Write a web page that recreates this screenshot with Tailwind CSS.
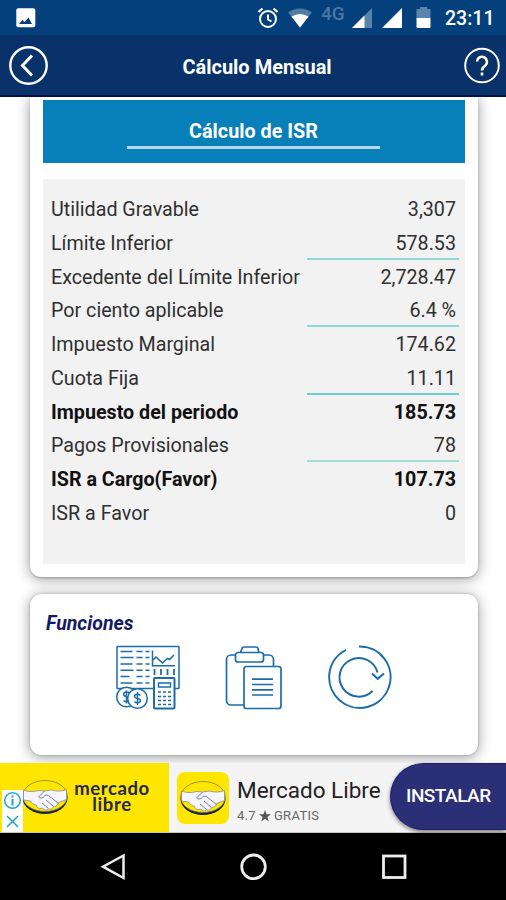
<!DOCTYPE html>
<html lang="es">
<head>
    <meta charset="UTF-8">
    <meta name="viewport" content="width=device-width, initial-scale=1.0">
    <title>Cálculo Mensual</title>
    <script src="https://cdn.jsdelivr.net/npm/@tailwindcss/browser@4"></script>
</head>
<body class="bg-white font-['Roboto',sans-serif]">
    <div class="w-[506px] h-[900px] flex flex-col overflow-hidden">
        <!-- Status bar -->
        <div class="h-[35px] shrink-0 bg-[#04407c] flex items-center pl-4 pr-[9px] text-white">
            <svg class="w-5 h-5 mt-px" viewBox="0 0 20 20">
                <rect x="0.3" y="0.3" width="19" height="19" rx="2" fill="#fff"/>
                <path d="M3 16l3.500-4 2 2 4-4.500 3.500 6.500z" fill="#04407c"/>
            </svg>
            <div class="ml-auto flex items-center">
                <svg class="w-[22px] h-[22px]" viewBox="0 0 22 22" fill="none" stroke="#fff" stroke-width="2">
                    <circle cx="11" cy="12" r="8"/>
                    <path d="M11 7.500v5l3.500 2"/>
                    <path d="M1.500 5l4-3.500M20.500 5l-4-3.500" stroke-width="2.200"/>
                </svg>
                <svg class="w-6 h-5 ml-[9px]" viewBox="0 0 24 20">
                    <path d="M0 4.500Q12-3.500 24 4.500L12 19.500z" fill="#4f7ba6"/>
                    <path d="M3.500 8.500Q12 3.500 20.500 8.500L12 19.500z" fill="#fff"/>
                </svg>
                <span class="ml-[9px] mb-2 w-[25px] text-[19px] leading-none font-medium text-[#4a76a4]">4G</span>
                <svg class="w-5 h-5 ml-[6px]" viewBox="0 0 20 20">
                    <path d="M20 0v20H0z" fill="#5b84ad"/>
                    <path d="M12.500 7.500V20H0z" fill="#fff"/>
                </svg>
                <svg class="w-5 h-5 ml-[10px]" viewBox="0 0 20 20">
                    <path d="M20 0v20H0z" fill="#fff"/>
                </svg>
                <svg class="w-[15px] h-[21px] ml-[14px]" viewBox="0 0 15 21">
                    <path d="M4 0h7v2h3.500v9H.5V2H4z" fill="#5b84ad"/>
                    <path d="M.5 11h14v9a1 1 0 0 1-1 1h-12a1 1 0 0 1-1-1z" fill="#fff"/>
                </svg>
                <span class="ml-[14px] mt-[2px] w-[52px] text-[19.500px] leading-none font-medium whitespace-nowrap">23:11</span>
            </div>
        </div>

        <!-- App bar -->
        <header class="h-[62px] shrink-0 bg-[#083269] border-b-2 border-[#03104f] flex items-center justify-between pl-2 pr-[3px]">
            <svg class="w-10 h-10" viewBox="0 0 40 40" fill="none" stroke="#fff">
                <circle cx="20.500" cy="20.500" r="18.200" stroke-width="2.400"/>
                <path d="M24 10.500L14.500 20.500L24 30.500" stroke-width="3"/>
            </svg>
            <h1 class="text-white text-[20px] font-bold mt-[4px] pl-[3px] whitespace-nowrap">Cálculo Mensual</h1>
            <svg class="w-10 h-10" viewBox="0 0 40 40" fill="none" stroke="#fff">
                <circle cx="19" cy="20.500" r="16.800" stroke-width="2"/>
                <path d="M14 16.500a5 5 0 1 1 8.300 4q-3.300 2.300-3.300 5" stroke-width="2.600"/>
                <path d="M19 27.500v3" stroke-width="2.600"/>
            </svg>
        </header>

        <!-- Content -->
        <main class="h-[666px] shrink-0 overflow-hidden px-[30px] flex flex-col">
            <section class="w-[448px] h-[480px] shrink-0 bg-white rounded-b-[11px] pl-[12.500px] pr-[13.500px] pt-[3px] shadow-[0_2px_14px_rgba(0,0,0,0.4),0_1px_2px_rgba(0,0,0,0.22)]">
                <div class="h-[63px] bg-[#077fb8] flex flex-col items-center pt-[18px]">
                    <h2 class="text-white text-[19.800px] leading-7 font-bold">Cálculo de ISR</h2>
                    <div class="w-[253px] h-[3px] bg-[#b5d8ea]"></div>
                </div>
                <div class="mt-4 h-[385px] bg-[#f2f2f2] pt-[13px] pl-[8.500px] pr-[5.500px] text-[19.700px] text-[#303030]">
                    <div class="h-[33.750px] flex items-center justify-between">
                        <span class="pt-[2px]">Utilidad Gravable</span>
                        <span class="w-[152px] h-full pt-[4px] pr-[3px] flex items-center justify-end border-b-2 border-transparent">3,307</span>
                    </div>
                    <div class="h-[33.750px] flex items-center justify-between">
                        <span class="pt-[2px]">Límite Inferior</span>
                        <span class="w-[152px] h-full pt-[4px] pr-[3px] flex items-center justify-end border-b-2 border-[#8fd8d5]">578.53</span>
                    </div>
                    <div class="h-[33.750px] flex items-center justify-between">
                        <span class="pt-[2px] whitespace-nowrap">Excedente del Límite Inferior</span>
                        <span class="w-[152px] h-full pt-[4px] pr-[3px] flex items-center justify-end border-b-2 border-transparent">2,728.47</span>
                    </div>
                    <div class="h-[33.750px] flex items-center justify-between">
                        <span class="pt-[2px]">Por ciento aplicable</span>
                        <span class="w-[152px] h-full pt-[4px] pr-[3px] flex items-center justify-end border-b-2 border-[#8fd8d5]">6.4 %</span>
                    </div>
                    <div class="h-[33.750px] flex items-center justify-between">
                        <span class="pt-[2px]">Impuesto Marginal</span>
                        <span class="w-[152px] h-full pt-[4px] pr-[3px] flex items-center justify-end border-b-2 border-transparent">174.62</span>
                    </div>
                    <div class="h-[33.750px] flex items-center justify-between">
                        <span class="pt-[2px]">Cuota Fija</span>
                        <span class="w-[152px] h-full pt-[4px] pr-[3px] flex items-center justify-end border-b-2 border-[#6fcfcf]">11.11</span>
                    </div>
                    <div class="h-[33.750px] flex items-center justify-between font-bold text-[#111]">
                        <span class="pt-[2px]">Impuesto del periodo</span>
                        <span class="w-[152px] h-full pt-[4px] pr-[3px] flex items-center justify-end border-b-2 border-transparent">185.73</span>
                    </div>
                    <div class="h-[33.750px] flex items-center justify-between">
                        <span class="pt-[2px]">Pagos Provisionales</span>
                        <span class="w-[152px] h-full pt-[4px] pr-[3px] flex items-center justify-end border-b-2 border-[#a5ddd3]">78</span>
                    </div>
                    <div class="h-[33.750px] flex items-center justify-between font-bold text-[#111]">
                        <span class="pt-[2px]">ISR a Cargo(Favor)</span>
                        <span class="w-[152px] h-full pt-[4px] pr-[3px] flex items-center justify-end border-b-2 border-transparent">107.73</span>
                    </div>
                    <div class="h-[33.750px] flex items-center justify-between">
                        <span class="pt-[2px]">ISR a Favor</span>
                        <span class="w-[152px] h-full pt-[4px] pr-[3px] flex items-center justify-end border-b-2 border-transparent">0</span>
                    </div>
                </div>
            </section>

            <section class="mt-[17px] w-[448px] h-[161px] shrink-0 bg-white rounded-[11px] pl-4 pt-[18px] shadow-[0_2px_14px_rgba(0,0,0,0.4),0_0_2px_rgba(0,0,0,0.3)]">
                <h3 class="text-[19.500px] leading-6 font-bold italic text-[#131a63]">Funciones</h3>
                <div class="mt-[9px] pl-[69px] flex">
                    <!-- Report with coins and calculator -->
                    <svg class="w-[66px] h-[66px]" viewBox="0 0 66 66" fill="none" stroke="#1b6cab" stroke-width="1.500">
                        <rect x="2" y="1.500" width="62" height="42" rx="0.500"/>
                        <path d="M5.500 6.500h12M5.500 12.500h13M5.500 19h12M5.500 25.300h13M5.500 31.500h9M5.500 38h12M21.500 6.500h6M30.500 6.500h4M21.500 12.500h6M30.500 12.500h4M21.500 19h6M30.500 19h4M21.500 25.300h6M30.500 25.300h4M21.500 31.500h6M30.500 31.500h4M21.500 38h6M30.500 38h4"/>
                        <path d="M37.500 5.500v15.300H60M38 15l3-3 6.500 6 5-4.500 2 1L59 10"/>
                        <path d="M39.500 24v6M46 24v6M52.500 24v6M59 24v6" stroke-width="1.800"/>
                        <rect x="39" y="33" width="20.500" height="30.500" rx="1" fill="#fff" stroke-width="2"/>
                        <rect x="43.500" y="38" width="12" height="4"/>
                        <path d="M43 47h3M48 47h3M53 47h3M43 51.500h3M48 51.500h3M53 51.500h3M43 55.500h3M48 55.500h3M53 55.500h3M43 59.500h3M48 59.500h3M53 59.500h3"/>
                        <circle cx="11.500" cy="52" r="9.800" fill="#fff"/>
                        <path d="M14.500 48c-2-2-6-1-6 1.500s6 2 6 4.500-4 3.500-6 1.500M11.500 45.500v13"/>
                        <circle cx="22.500" cy="53.500" r="9.800" fill="#fff"/>
                        <path d="M25.500 50.500c-1.500-2-6-1.500-6 1s6 1.500 6 4-4.500 3-6 1M22.500 47v13"/>
                    </svg>
                    <!-- Clipboard -->
                    <svg class="w-[60px] h-[66px] ml-[42.500px]" viewBox="0 0 60 66" fill="none" stroke="#1b6cab" stroke-width="1.700">
                        <path d="M11.500 10H7a4.500 4.500 0 0 0-4.500 4.500v41A4.500 4.500 0 0 0 7 60h13M39 10h6a4.500 4.500 0 0 1 4.500 4.500V21"/>
                        <path d="M16.500 7.500L18 3.500a2 2 0 0 1 2-1.500h12a2 2 0 0 1 2 1.500l1 4"/>
                        <rect x="11.500" y="7.500" width="28" height="9.500" rx="2.500"/>
                        <rect x="20" y="21.500" width="37" height="42" rx="2.500" fill="#fff"/>
                        <path d="M28 34.200h21M28 39.500h21M28 44.800h21M28 50h21"/>
                    </svg>
                    <!-- Reload -->
                    <svg class="w-[66px] h-[66px] ml-[42.500px]" viewBox="0 0 66 66" fill="none" stroke="#1b6cab" stroke-width="2">
                        <path d="M33 1.500A30.700 30.700 0 1 1 20 4.800"/>
                        <path d="M51.500 27.500A19.300 19.300 0 1 0 46.500 46"/>
                        <path d="M46 28.500l5.700 5.300 6.300-5.300"/>
                    </svg>
                </div>
            </section>
        </main>

        <!-- Ad banner -->
        <div class="h-[70px] shrink-0 bg-[#f4f4f4] flex relative border-b border-[#c8c8c8]">
            <div class="w-[169px] h-full bg-[#ffe600] flex items-center">
                <svg class="w-[46px] h-9 ml-[22px] mt-[-1px]" viewBox="0 0 46 36">
                    <ellipse cx="23" cy="19" rx="22.500" ry="16" fill="#1c2150"/>
                    <ellipse cx="23" cy="17" rx="22.300" ry="15.500" fill="#ffe600" stroke="#75713a" stroke-width="0.700"/>
                    <path d="M1.500 11c5 2 10 2 15 .5l6 .5 7-1c5 1.500 10 1.500 15-.5v10l-8 3c-1 4-4 4-5 4-1 3-4 3-5 2-2 3-5 1-6-.5-4 1.500-6-1-6-3-3 0-5-2-6-4l-7-1z" fill="#f5f5fa" stroke="#777ca5" stroke-width="0.700"/>
                    <path d="M22.500 12l-6 6c2 2 5 1 7-2l3 .5 10 8M24 21l7 6M20 24l6 5" fill="none" stroke="#6c719d" stroke-width="0.900"/>
                </svg>
                <div class="ml-[5px] mt-[-4px] w-[78px] text-center text-[18.500px] leading-[16px] tracking-[0.600px] font-bold text-[#252650] font-['Lato',sans-serif]">
                    <div>mercado</div>
                    <div>libre</div>
                </div>
            </div>
            <div class="absolute left-[2px] top-[27px] w-[21px] h-[42px] bg-white">
                <svg class="w-[21px] h-[42px]" viewBox="0 0 21 42" fill="none" stroke="#20a5cc" stroke-width="1.500">
                    <circle cx="10.500" cy="10.500" r="7.800"/>
                    <path d="M10.500 9v6.500M10.500 5.500v2" stroke-width="2"/>
                    <path d="M5 26l11 11M16 26L5 37"/>
                </svg>
            </div>
            <div class="w-[52px] h-[52px] mt-[9px] ml-2 rounded-[8px] bg-[#ffe600] flex items-center justify-center">
                <svg class="w-[46px] h-9" viewBox="0 0 46 36">
                    <ellipse cx="23" cy="19" rx="22.500" ry="16" fill="#1c2150"/>
                    <ellipse cx="23" cy="17" rx="22.300" ry="15.500" fill="#ffe600" stroke="#75713a" stroke-width="0.700"/>
                    <path d="M1.500 11c5 2 10 2 15 .5l6 .5 7-1c5 1.500 10 1.500 15-.5v10l-8 3c-1 4-4 4-5 4-1 3-4 3-5 2-2 3-5 1-6-.5-4 1.500-6-1-6-3-3 0-5-2-6-4l-7-1z" fill="#f5f5fa" stroke="#777ca5" stroke-width="0.700"/>
                    <path d="M22.500 12l-6 6c2 2 5 1 7-2l3 .5 10 8M24 21l7 6M20 24l6 5" fill="none" stroke="#6c719d" stroke-width="0.900"/>
                </svg>
            </div>
            <div class="ml-2 pt-[13px] w-[153px] whitespace-nowrap">
                <div class="text-[22.500px] leading-7 text-[#222]">Mercado Libre</div>
                <div class="mt-[4px] text-[13px] leading-4 tracking-[0.300px] text-[#666] flex items-center">
                    <span>4.7</span>
                    <svg class="w-3 h-3 mx-[3px]" viewBox="0 0 24 24" fill="#555"><path d="M12 0l3 8.500h9l-7.200 5.500 2.700 9L12 17.600 4.500 23l2.700-9L0 8.500h9z"/></svg>
                    <span>GRATIS</span>
                </div>
            </div>
            <div class="w-[116px] h-[67px] shrink-0 rounded-l-full bg-[#2b2f76] border-y border-l border-[#1c2070] flex items-center pl-[15px] text-white text-[19px] tracking-[-0.500px] font-medium shadow-[0_2px_4px_rgba(0,0,0,0.5)]">INSTALAR</div>
        </div>

        <!-- Navigation bar -->
        <nav class="h-[67px] shrink-0 bg-black flex items-center">
            <svg class="w-7 h-7 ml-[99px]" viewBox="0 0 28 28" fill="none" stroke="#eee" stroke-width="2.500"><path d="M24.500 2.500v22.500L4 13.700z"/></svg>
            <svg class="w-7 h-7 ml-[112px]" viewBox="0 0 28 28" fill="none" stroke="#eee" stroke-width="2.800"><circle cx="14.500" cy="13.800" r="11.800"/></svg>
            <svg class="w-7 h-7 ml-[113px]" viewBox="0 0 28 28" fill="none" stroke="#eee" stroke-width="2.800"><rect x="3.500" y="3" width="21.500" height="21.500"/></svg>
        </nav>
    </div>
</body>
</html>
